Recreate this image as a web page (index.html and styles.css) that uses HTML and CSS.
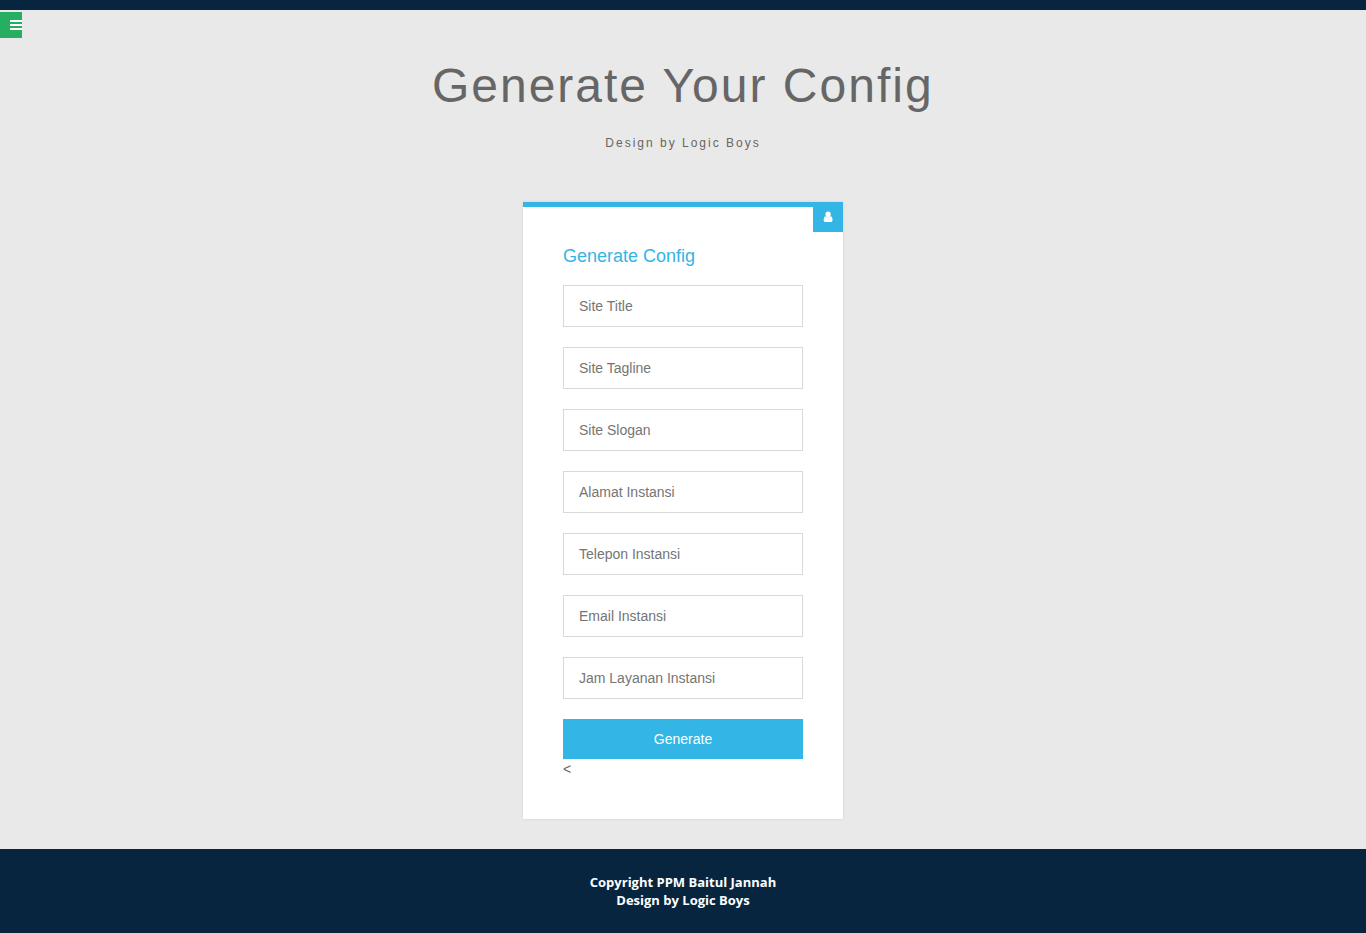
FILE: index.html
```html
<!DOCTYPE html>
<html lang="id">
<head>
<meta charset="utf-8">
<title>Generate Your Config</title>
<link rel="stylesheet" href="styles.css">
</head>
<body>
<div class="topbar"></div>
<button class="menu-toggle" type="button" aria-label="Menu">
<svg width="12" height="14" viewBox="0 0 12 14"><path fill="#fff" d="M0 2h12v2H0zM0 6h12v2H0zM0 10h12v2H0z"/></svg>
</button>
<main class="page">
<header class="heading">
<h1 class="title">Generate Your Config</h1>
<span class="byline">Design by Logic Boys</span>
</header>
<section class="card">
<div class="badge">
<svg width="10" height="12" viewBox="0 0 10 12"><g fill="#fff"><ellipse cx="5.100" cy="3.200" rx="2.600" ry="2.800"/><path d="M2.800 5.300Q5.100 7.100 7.400 5.300C9.200 5.300 9.500 7.300 9.500 9.200C9.500 10.300 8.800 11 7.800 11H2.400C1.400 11 .7 10.300.7 9.200C.7 7.300 1 5.300 2.800 5.300z"/></g></svg>
</div>
<h2 class="card-title">Generate Config</h2>
<form class="form">
<input class="field" type="text" placeholder="Site Title">
<input class="field" type="text" placeholder="Site Tagline">
<input class="field" type="text" placeholder="Site Slogan">
<input class="field" type="text" placeholder="Alamat Instansi">
<input class="field" type="text" placeholder="Telepon Instansi">
<input class="field" type="text" placeholder="Email Instansi">
<input class="field" type="text" placeholder="Jam Layanan Instansi">
<button class="submit" type="button">Generate</button>
</form>
<div class="stray">&lt;</div>
</section>
</main>
<footer class="footer">Copyright PPM Baitul Jannah<br>Design by Logic Boys</footer>
</body>
</html>
```
FILE: styles.css
```css
* { box-sizing: border-box; }
body {
  margin: 0;
  min-height: 933px;
  background: #e9e9e9;
  color: #666;
  font: 14px/20px "Liberation Sans", Arial, sans-serif;
}
.topbar { height: 10px; background: #07253f; }
.menu-toggle {
  position: absolute;
  top: 12px;
  left: 0;
  width: 22px;
  height: 26px;
  padding: 6px 0 6px 10px;
  border: 0;
  background: #27ae60;
}
.menu-toggle svg, .badge svg { display: block; }
.page { height: 839px; padding-top: 51px; }
.heading { text-align: center; letter-spacing: 2px; }
.title { margin: 0; padding-right: .5px; font-size: 48px; font-weight: 400; line-height: 50px; }
.byline { display: block; margin-top: 22px; font-size: 12px; line-height: 20px; }
.card {
  position: relative;
  width: 320px;
  height: 617px;
  margin: 49px auto 0;
  padding: 40px;
  border-top: 5px solid #33b5e5;
  background: #fff;
  box-shadow: 0 0 3px rgba(0, 0, 0, .1);
}
.badge {
  position: absolute;
  top: -5px;
  right: 0;
  width: 30px;
  height: 30px;
  padding: 9px 10px;
  background: #33b5e5;
}
.card-title { margin: 0 0 20px; color: #33b5e5; font-size: 18px; font-weight: 400; line-height: 18px; }
.form { display: flex; flex-direction: column; gap: 20px; }
.field {
  width: 100%;
  height: 42px;
  padding: 10px 15px;
  border: 1px solid #d9d9d9;
  border-radius: 0;
  font: inherit;
}
.field::placeholder { color: #757575; }
.submit { height: 40px; border: 0; background: #33b5e5; color: #fff; font: inherit; }
.footer {
  height: 84px;
  padding-top: 24px;
  background: #07253f;
  color: #fff;
  text-align: center;
  font: 700 13px/18px "Open Sans", sans-serif;
}
```
